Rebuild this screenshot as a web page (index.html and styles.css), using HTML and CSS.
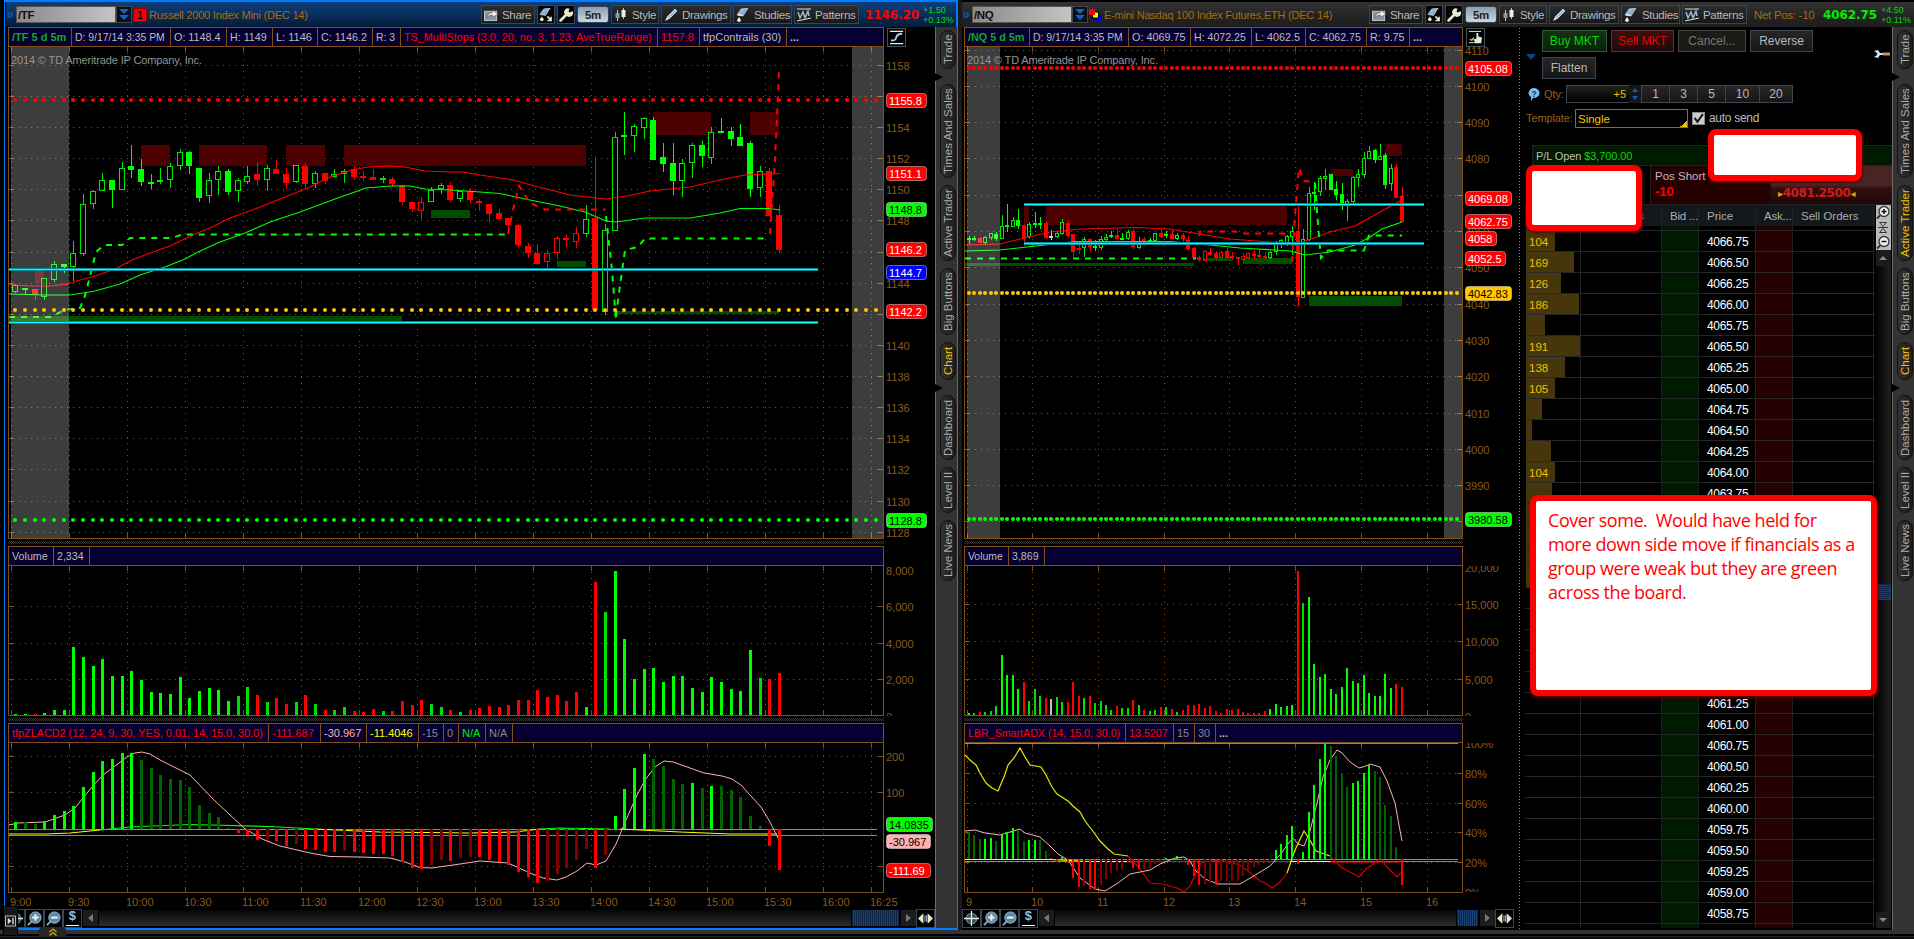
FILE: index.html
```html
<!DOCTYPE html>
<html lang="en">
<head>
  <meta charset="UTF-8" />
  <title>Charts</title>
  <link rel="stylesheet" href="styles.css">
</head>
<body>
  <svg class="defs" width="0" height="0">
    <symbol id="i-share" viewBox="0 0 15 13"><rect x="0.5" y="2.5" width="13" height="10" fill="#8796a5" stroke="#c3ccd4"/><path d="M3 9 Q4 4 9 4 V1 L15 5.5 L9 9 V6.5 Q5 6.5 3 9Z" fill="#f2f2e6" stroke="#333" stroke-width=".5"/></symbol>
    <symbol id="i-flask" viewBox="0 0 14 14"><path d="M5 1 L12 0 L7 8 L1 7Z" fill="#8fb4d0" stroke="#dfeaf2" stroke-width=".6"/><path d="M1 7 L7 8 L4 6Z" fill="#fff"/><path d="M3 9 L5 12 A2 2 0 1 1 1 12Z" fill="#e4ecd4"/></symbol>
    <symbol id="i-flask2" viewBox="0 0 15 15"><path d="M5 1 L12 0 L7 8 L1 7Z" fill="#8fb4d0" stroke="#dfeaf2" stroke-width=".6"/><path d="M3 9 L5 12 A2 2 0 1 1 1 12Z" fill="#e4ecd4"/><path d="M9 9 L13 13 M13 9.5 V13.5 H9" fill="none" stroke="#e8ecd8" stroke-width="1.6"/></symbol>
    <symbol id="i-wrench" viewBox="0 0 14 14"><path d="M1.5 12.5 L8 6" stroke="#e6ead2" stroke-width="2.6" stroke-linecap="round"/><path d="M7 7 A3.5 3.5 0 0 1 10.5 .8 L9.5 3.5 L11 4.5 L13.3 3 A3.5 3.5 0 0 1 7 7Z" fill="#e6ead2"/></symbol>
    <symbol id="i-style" viewBox="0 0 14 14"><path d="M3.5 2 V13 M9.5 0 V11" stroke="#b9c8d4"/><rect x="1.5" y="5" width="4" height="5" fill="#6fa0c4"/><rect x="7.5" y="2" width="4" height="7" fill="#e9eede"/></symbol>
    <symbol id="i-pencil" viewBox="0 0 14 14"><path d="M3 9 L11 1 L13 3 L5 11Z" fill="#9dc0dc" stroke="#e0ecf5" stroke-width=".7"/><path d="M3 9 L5 11 L1 13Z" fill="#f0ead0"/></symbol>
    <symbol id="i-patterns" viewBox="0 0 14 14"><path d="M0 1 L14 1 M0 13 L14 10" stroke="#dfe6dc"/><path d="M1 4 L3 10 L6 4 L8 10 L11 3 L12 8" fill="none" stroke="#8fb4d0" stroke-width="1.6"/></symbol>
    <symbol id="i-cross" viewBox="0 0 16 16"><circle cx="8" cy="8" r="5.5" fill="#33465a" stroke="#587893" stroke-width="1.5"/><path d="M8 0 V16 M0 8 H16" stroke="#eef0d4" stroke-width="1.4"/></symbol>
    <symbol id="i-zin" viewBox="0 0 16 16"><path d="M1 15 L5 11" stroke="#86a6bd" stroke-width="2"/><circle cx="9" cy="7" r="6" fill="#5d86a8" stroke="#a9c6dc"/><path d="M9 3.5 V10.5 M5.5 7 H12.5" stroke="#f4f4dc" stroke-width="2.2"/></symbol>
    <symbol id="i-zout" viewBox="0 0 16 16"><path d="M1 15 L5 11" stroke="#86a6bd" stroke-width="2"/><circle cx="9" cy="7" r="6" fill="#5d86a8" stroke="#a9c6dc"/><path d="M5.5 7 H12.5" stroke="#f4f4dc" stroke-width="2.2"/></symbol>
    <symbol id="i-expand" viewBox="0 0 14 12"><path d="M0 6 L5 1 V11Z M14 6 L9 1 V11Z" fill="#e2ecc8"/><path d="M6.5 3 V9 M8 3 V9" stroke="#9cb0c0"/></symbol>
    <symbol id="i-curve" viewBox="0 0 16 16"><path d="M1 1.5 H15 M1 14.5 H15" stroke="#f5f0c0" stroke-width="1.2"/><path d="M2 11 C8 12 7 9 8 7 S10 4 14 4" fill="none" stroke="#a9d2ee" stroke-width="2"/></symbol>
    <symbol id="i-hand" viewBox="0 0 16 16"><path d="M1 1.5 H14 M1 13.5 H10" stroke="#f5f0c0"/><path d="M2 10 Q5 12 6 8" fill="none" stroke="#a9d2ee" stroke-width="1.5"/><path d="M8 14 L6 10 L9 9 V3.5 Q10 2.5 11 3.5 V7 L15 8 L14 14Z" fill="#e6e8d8"/></symbol>
    <symbol id="i-zp" viewBox="0 0 14 14"><circle cx="8" cy="6" r="5" fill="#eee" stroke="#333" stroke-width="1.3"/><path d="M8 3.5 V8.5 M5.5 6 H10.5" stroke="#111" stroke-width="1.5"/><path d="M1 13 L4 10" stroke="#333" stroke-width="2"/></symbol>
    <symbol id="i-zm" viewBox="0 0 14 14"><circle cx="8" cy="6" r="5" fill="#eee" stroke="#333" stroke-width="1.3"/><path d="M5.5 6 H10.5" stroke="#111" stroke-width="1.5"/><path d="M1 13 L4 10" stroke="#333" stroke-width="2"/></symbol>
  </svg>

  <main class="desk">
    <section class="window win-left">
      <header class="titlebar">
        <span class="ring"></span>
        <div class="symbol">/TF</div><div class="drop"><i></i><i></i></div>
        <span class="link-one">1</span>
        <span class="name">Russell 2000 Index Mini (DEC 14)</span>
        <div class="tools"></div>
        <span class="last down">1146.20</span>
        <span class="change">+1.50<br>+0.13%</span>
      </header>
      <div class="body">
        <div class="charts" id="tf"></div>
        <nav class="tabs"></nav>
      </div>
    </section>

    <div class="gutter"></div>

    <section class="window win-right">
      <header class="titlebar">
        <span class="ring"></span>
        <div class="symbol">/NQ</div><div class="drop"><i></i><i></i></div>
        <svg class="link-multi" viewBox="0 0 13 12"><path d="M7 6h6v6h-6z" fill="#00f"/><path d="M3.5 3h6v6h-6z" fill="#ff0" stroke="#000"/><path d="M0 0h6v6h-6z" fill="#f00"/></svg>
        <span class="name">E-mini Nasdaq 100 Index Futures,ETH (DEC 14)</span>
        <div class="tools"></div>
        <span class="netpos">Net Pos: -10</span>
        <span class="last up">4062.75</span>
        <span class="change">+4.50<br>+0.11%</span>
      </header>
      <div class="body">
        <div class="charts" id="nq"></div>
        <div class="dots"></div>
        <aside class="trader">
          <div class="orders">
            <i class="tri"></i>
            <div class="order-buttons">
              <button class="buy">Buy MKT</button><button class="sell">Sell MKT</button><button class="cancel">Cancel...</button><button class="reverse">Reverse</button>
              <button class="flatten">Flatten</button>
            </div>
            <svg class="spanner" viewBox="0 0 16 8"><path d="M0 1 L4 0 L6 3 H9 V5 H6 L4 8 L0 7 L3 5 V3Z" fill="#cfe0ee"/><path d="M9 2.5 H16 V5.5 H9Z" fill="#d98c3a"/></svg>
          </div>
          <div class="qty">
            <svg class="help" viewBox="0 0 12 13"><path d="M6 0 A6 5 0 1 1 5 10 L3 13 L3 9 A6 5 0 0 1 6 0Z" fill="#7fc0ee"/><text x="6" y="9" text-anchor="middle">?</text></svg>
            <label>Qty:</label>
            <div class="qty-input">+5</div><div class="spin"><i></i><i></i></div>
            <button>1</button><button>3</button><button>5</button><button class="w">10</button><button class="w">20</button>
          </div>
          <div class="template">
            <label>Template:</label><div class="select">Single</div>
            <div class="check"><svg viewBox="0 0 10 10"><path d="M1.5 4.5 L4 8 L9 1" fill="none" stroke="#111" stroke-width="1.8"/></svg></div>
            <span>auto send</span>
          </div>
          <div class="pl">P/L Open <b>$3,700.00</b></div>
          <div class="pos">
            <div class="pos-short">Pos Short<strong>-10</strong></div>
            <div class="avg"><i>▸</i>4081.2500<i>◂</i></div>
          </div>
          <div class="ladder">
            <div class="rows">
              <div class="row head"><span></span><span class="r">s</span><span>Bid ...</span><span>Price</span><span>Ask...</span><span>Sell Orders</span></div>
              <div class="scroll-rows" id="ladder"></div>
            </div>
            <div class="scroll">
              <div class="zooms"><svg><use href="#i-zp"/></svg><svg viewBox="0 0 10 12"><path d="M0 6 H10 M1.5 1 H8.5 L5 5Z M1.5 11 H8.5 L5 7Z" fill="none" stroke="#333"/></svg><svg><use href="#i-zm"/></svg></div>
              <div class="arrow up-arrow"></div>
              <div class="track"><div class="thumb"></div></div>
              <div class="arrow down-arrow"></div>
            </div>
          </div>
          <div class="mask mask-bal"></div>
          <div class="mask mask-buy"></div>
          <div class="note">Cover some.&nbsp; Would have held for<br>more down side move if financials as a<br>group were weak but they are green<br>across the board.</div>
        </aside>
        <nav class="tabs"></nav>
      </div>
    </section>
    <div class="pin"><svg viewBox="0 0 12 12"><path d="M.5 .5 H11.5 V11.5 H.5Z" fill="none" stroke="#ccc"/><path d="M3 2.5 L7 6 L3 9.5Z M8 2.5 H9.5 V9.5 H8Z" fill="#ddd"/></svg></div>
    <div class="pull"><svg viewBox="0 0 8 8"><path d="M.5 4 L4 1 L7.5 4 M.5 7.5 L4 4.5 L7.5 7.5" fill="none" stroke="#e0a800" stroke-width="1.2"/></svg></div>
  </main>
  <footer class="bottom"></footer>
  <script src="charts.js"></script>
</body>
</html>
```

FILE: styles.css
```css
* { box-sizing: border-box; }

body {
  margin: 0;
  width: 1914px;
  height: 939px;
  overflow: hidden;
  background: #000;
  color: #bcbcbc;
  font-family: "Liberation Sans", Arial, sans-serif;
  font-size: 11px;
}

.defs { position: absolute; }

.desk {
  display: flex;
  position: relative;
  height: 930px;
  padding-left: 4px;
}

.window { display: flex; flex-direction: column; }

.win-left {
  width: 954px;
  border: solid #007eff;
  border-width: 2px 2px 2px 1px;
}

.win-right {
  width: 952px;
  padding-top: 2px;
}

.gutter {
  width: 4px;
  background: repeating-conic-gradient(#333 0 25%, #000 0 50%) 0 0 / 2px 2px;
}

/* title bar */
.titlebar {
  display: flex;
  align-items: center;
  flex: none;
  height: 25px;
  background: linear-gradient(#333, #222 60%, #1e1e1e);
}

.win-left .titlebar {
  background: linear-gradient(#0c3f7a, #082f5c 50%, #041b36);
  border-left: 1px solid #000;
}

.ring {
  width: 6px;
  height: 6px;
  margin: 0 3px 0 1px;
  border: 2px solid #0a4fa8;
  border-radius: 50%;
}

.symbol {
  width: 100px;
  height: 17px;
  padding-left: 1px;
  line-height: 16px;
  font-size: 11.5px;
  font-weight: bold;
  letter-spacing: -.4px;
  color: #111;
  border: 1px solid #555;
  background: linear-gradient(90deg, #8a8a8a, #c4c4c4);
}

.drop {
  display: flex;
  flex-direction: column;
  align-items: center;
  justify-content: center;
  gap: 1px;
  width: 16px;
  height: 17px;
  background: #06101c;
  border: 1px solid #444;
}

.drop i {
  border: 5px solid transparent;
  border-top: 5px solid #1560c4;
  border-bottom: 0;
}

.link-one {
  width: 14px;
  height: 14px;
  margin-left: 1px;
  line-height: 13px;
  text-align: center;
  color: #000;
  background: #f00000;
  border: 1px solid #900;
}

.link-multi { width: 13px; height: 12px; margin-left: 1px; }

.name {
  flex: 1;
  margin-left: 2px;
  color: #a86c0c;
  white-space: nowrap;
  letter-spacing: -.22px;
}

.tools { display: flex; gap: 2px; height: 19px; }

.tool {
  display: flex;
  align-items: center;
  gap: 4px;
  padding-left: 2px;
  font-size: 11.5px;
  letter-spacing: -.3px;
  color: #b8b8b8;
  border: 1px solid #3c4450;
  background: linear-gradient(#2c2c2c, #181818);
}

.tool svg { width: 14px; height: 14px; flex: none; }
.tool.dark { background: #050505; padding-left: 1px; }

.tool.period {
  justify-content: center;
  padding: 0;
  margin: 1px 0;
  border-radius: 3px;
  font-weight: bold;
  color: #222;
  background: linear-gradient(#8e9eae, #c8d6e2);
}

.netpos { margin-left: 7px; width: 69px; color: #a86c0c; font-size: 11.5px; white-space: nowrap; letter-spacing: -.3px; }
.last { width: 58px; margin-left: 6px; font: bold 12px "DejaVu Sans", sans-serif; letter-spacing: -.1px; }
.last.down { color: #f00; }
.last.up { margin-left: 0; color: #0e0; }
.change { width: 33px; font-size: 9px; line-height: 10px; color: #0d0; white-space: nowrap; }

.body { display: flex; flex: 1; min-height: 0; }

/* chart column */
.charts { display: flex; flex-direction: column; }
#tf { width: 930px; padding-left: 3px; }
#nq { width: 555px; padding-left: 2px; }

.strip { display: flex; height: 20px; flex: none; align-items: center; }

.cells {
  display: flex;
  height: 20px;
  background: #050030;
  border: 1px solid #7f5117;
}

#tf .cells, #tf .splitter { width: 876px; }
#nq .cells, #nq .splitter { width: 499px; }

.cell {
  flex: none;
  padding-left: 3px;
  line-height: 18px;
  white-space: nowrap;
  overflow: hidden;
  border-right: 1px solid #7f5117;
}

.cell:last-child { border-right: 0; }
.cell span { display: inline-block; transform-origin: 0 50%; }

.scale-btn { width: 19px; height: 19px; margin-left: 3px; border: 1px solid #46535f; background: #000; }
.scale-btn svg { display: block; width: 15px; height: 15px; margin: 1px; }

.splitter {
  flex: none;
  height: 7px;
  background: repeating-conic-gradient(#3a3a3a 0 25%, #000 0 50%) 0 0 / 2px 2px content-box;
  padding: 2px 0;
}

.plot { display: block; flex: none; }
.plot text { font-size: 11px; fill: #8a5a1c; }
.plot .copy { fill: #949494; }

.navbar { display: flex; height: 19px; flex: none; }
.win-left .navbar { margin-left: -3px; padding-left: 1px; }
.win-right .navbar { margin-left: -2px; margin-right: 3px; }

.nav-btn {
  width: 19px;
  height: 19px;
  padding: 1px;
  border: 1px solid #3a4655;
  background: #000;
}

.nav-btn svg { display: block; width: 15px; height: 15px; }
.dollar { text-align: center; font: bold 13px "Liberation Mono", monospace; color: #8cc0ea; line-height: 14px; padding: 0; }
.dollar u { display: block; width: 13px; height: 1px; margin: 1px auto 0; background: #fff; }

.nav-arrow {
  display: flex;
  align-items: center;
  justify-content: center;
  width: 15px;
  height: 16px;
  margin: 1px 0 0 1px;
  background: #1c1c1c;
}

.nav-arrow::after { content: ""; border: 4px solid transparent; border-right: 5px solid #777; border-left: 0; }
.nav-arrow.right::after { border-left: 5px solid #777; border-right: 0; }
.nav-track { flex: 1; height: 16px; margin: 1px 1px; display: flex; justify-content: flex-end; background: linear-gradient(#060606, #2c2c2c); }
.nav-thumb { background: repeating-linear-gradient(90deg, #0c2344 0 1px, #1c4272 1px 2px); border-left: 1px solid #000; }
#tf .nav-thumb { width: 48px; }
#nq .nav-thumb { width: 22px; }

/* side tabs */
.tabs {
  display: flex;
  flex-direction: column;
  align-items: center;
  width: 22px;
  flex: none;
  padding: 3px 0 0 2px;
  background: #333;
  border-left: 1px solid #6c6c6c;
  position: relative;
}

.tab {
  display: flex;
  align-items: center;
  justify-content: center;
  width: 16px;
  flex: none;
  margin-bottom: 7px;
  border: 1px solid #111;
  border-radius: 8px;
  background: linear-gradient(90deg, #1c1c1c, #333);
  writing-mode: vertical-rl;
  transform: rotate(180deg);
  white-space: nowrap;
  font-size: 11.5px;
  color: #acacac;
}

.tab.on { color: #f0c000; }
.tab.gap { margin-bottom: 15px; }
.notch { position: absolute; left: -1px; border: 4px solid transparent; border-left: 8px solid #000; border-right: 0; }
.notch.first { top: 46px; }
.notch.second { top: 357px; }

/* active trader */
.dots {
  width: 8px;
  background: radial-gradient(#888 .7px, transparent .9px) 1px 0 / 3px 3px;
  border-right: 4px solid #000;
}

.trader { position: relative; flex: 1; height: 901px; overflow: hidden; }

button {
  padding: 0;
  font: inherit;
  font-size: 12px;
  color: #b8b8b8;
  border: 1px solid #3c4652;
  background: linear-gradient(#262626, #161616);
}

.orders { display: flex; height: 56px; padding-top: 3px; align-items: flex-start; }
.orders .tri { margin: 24px 10px 0 1px; border: 5.5px solid transparent; border-top: 6px solid #0a4590; border-bottom: 0; }
.order-buttons { width: 284px; display: flex; flex-wrap: wrap; gap: 5px 4px; margin-left: -4px; }
.order-buttons button { height: 22px; }
.order-buttons .buy { width: 65px; color: #0d0; background: linear-gradient(#163016, #0b200b); border-color: #2f5a3a; }
.order-buttons .sell { width: 63px; color: #e00; background: linear-gradient(#3a1010, #200a0a); border-color: #5a3030; }
.order-buttons .cancel { width: 68px; color: #777; background: #1a1a16; border-color: #44483f; }
.order-buttons .reverse { width: 63px; }
.order-buttons .flatten { width: 54px; }
.spanner { width: 16px; height: 8px; margin: 20px 0 0 48px; flex: none; }

.qty { display: flex; align-items: center; height: 22px; padding-left: 3px; }
.help { width: 12px; height: 13px; margin-right: 4px; }
.help text { font-size: 9px; font-weight: bold; fill: #123a6a; }
.qty label { width: 22px; color: #96621a; }
.qty-input { width: 63px; height: 18px; line-height: 16px; text-align: right; padding-right: 3px; color: #f0c000; border: 1px solid #3c4652; border-right: 0; background: linear-gradient(#222, #000); }
.spin { display: flex; flex-direction: column; gap: 4px; justify-content: center; align-items: center; width: 12px; height: 18px; background: #161616; }
.spin i { border: 3.5px solid transparent; border-bottom: 4px solid #1258b8; border-top: 0; }
.spin i + i { border-top: 4px solid #1258b8; border-bottom: 0; }
.qty button { width: 28px; height: 18px; border-right-width: 0; }
.qty button.w { width: 34px; }
.qty button:last-child { border-right-width: 1px; }

.template { display: flex; align-items: center; height: 26px; }
.template label { width: 50px; color: #96621a; white-space: nowrap; padding-left: 1px; letter-spacing: -.1px; }
.template span { font-size: 12px; letter-spacing: -.3px; }
.select {
  width: 113px;
  height: 19px;
  padding-left: 2px;
  line-height: 19px;
  font-size: 11.5px;
  color: #f0c800;
  border: 1px solid #9a6a14;
  background: linear-gradient(135deg, transparent 50%, #f0c000 50%) 100% 100% / 7px 7px no-repeat;
}
.check { width: 13px; height: 13px; margin: 0 4px; background: #ccc; border: 1px solid #888; }
.check svg { display: block; width: 11px; height: 11px; }

.pl { height: 21px; margin: 14px 0 0 7px; padding-left: 3px; line-height: 20px; background: #001a00; border: 1px solid #222; border-right: 0; letter-spacing: -.1px; }
.pl b { font-weight: normal; color: #0d0; }
.pos { display: flex; height: 38px; margin-left: 125px; }
.pos-short { display: flex; flex-direction: column; width: 121px; padding: 4px 4px 0; font-size: 11.5px; background: #260000; border-right: 1px solid #111; border-left: 1px solid #222; }
.pos-short strong { margin-top: 2px; font-size: 13px; color: #f00; }
.avg { flex: 1; padding: 20px 0 0 7px; font: bold 12px "DejaVu Sans", sans-serif; letter-spacing: -.4px; color: #d81818; white-space: nowrap; background: linear-gradient(#4a2424 0 50%, #300e0e 60%, #220606); }
.avg i { color: #e8a000; font-style: normal; font-size: 10px; }

.ladder { display: flex; height: 724px; border-top: 1px solid #222; }
.rows { width: 350px; display: flex; flex-direction: column; }
.row { display: grid; flex: none; grid-template-columns: 56px 81px 37px 57px 37px 81px; height: 21px; border-bottom: 1px solid #262626; }
.row span { padding-left: 8px; border-right: 1px solid #222; font-size: 11.5px; line-height: 22px; white-space: nowrap; overflow: hidden; }
.row span:nth-child(3) { background: #001a00; }
.row span:nth-child(5) { background: #260000; }
.row span:nth-child(4) { color: #fff; font-size: 12px; letter-spacing: -.3px; }
.head { background: #12181c; border: 0; }
.head span:nth-child(n) { background: none; color: #acacac; font-size: 11.5px; letter-spacing: 0; }
.head span:nth-child(3), .head span:nth-child(5) { letter-spacing: -.2px; }
.head .r { text-align: right; padding-right: 17px; }
.row .size { position: relative; padding-left: 4px; color: #f0c000; }
.size i { position: absolute; left: 1px; top: 0; bottom: 0; background: #46360c; }
.size em { position: relative; font-style: normal; }
.stub { flex: none; height: 5px; overflow: hidden; }
.stub .row { height: 5px; }
.scroll-rows { flex: 1; overflow: hidden; }

.scroll { display: flex; flex-direction: column; align-items: center; width: 16px; }
.zooms { display: flex; flex-direction: column; align-items: center; width: 15px; height: 45px; background: #bbb; }
.zooms svg { width: 14px; height: 15px; }
.zooms svg:nth-child(2) { width: 10px; height: 13px; margin: 1px; }
.arrow { display: flex; align-items: center; justify-content: center; width: 15px; height: 16px; background: #1c1c1c; }
.arrow::after { content: ""; border: 4px solid transparent; border-bottom: 4px solid #888; border-top: 0; }
.down-arrow::after { border-top: 4px solid #888; border-bottom: 0; }
.track { flex: 1; width: 15px; padding-top: 318px; background: linear-gradient(90deg, #000, #222); }
.thumb { height: 16px; background: repeating-linear-gradient(#0c2344 0 1px, #1c4272 1px 2px); }

/* annotations drawn over the panels */
.mask, .note {
  position: absolute;
  background: #fff;
  border: 6px solid #f00;
  border-radius: 8px;
  box-shadow: 1px 2px 3px #600;
}

.mask-bal { left: 183px; top: 102px; width: 154px; height: 52px; }
.mask-buy { left: 1px; top: 138px; width: 116px; height: 66px; }

.note {
  left: 5px;
  top: 468px;
  width: 347px;
  height: 201px;
  padding: 7px 4px 0 12px;
  font: 18px/24px "Open Sans", "Noto Sans", sans-serif;
  letter-spacing: -.44px;
  white-space: nowrap;
  color: #f00;
}

.pin { position: absolute; left: 3px; top: 906px; width: 15px; height: 30px; padding: 8px 1px; background: #181818; border: 1px solid #000; }
.pin svg { display: block; width: 11px; height: 12px; }
.pull { position: absolute; left: 39px; top: 927px; width: 27px; height: 9px; background: #262626; border-radius: 4px 4px 0 0; text-align: center; }
.pull svg { display: block; width: 8px; height: 8px; margin: 1px auto; }

.bottom { height: 9px; background: linear-gradient(#333 4px, #000 4px 6px, #222 6px 7px, #0c0c0c 7px); }
```

FILE: charts.js
```js
const GREEN = '#00ff00', RED = '#ff0000', GRID = '#7f5117';
const BAR = { G: '#00ff00', g: '#00e000', d: '#006400', R: '#ff0000', m: '#800000', W: '#c0c0c0' };

const tf = {
  id: 'tf', x0: 8, x1: 884, end: 935, first: 15.2, step: 9.667, body: 6,
  shade: [[11, 69], [852, 883]],
  vgrid: [11, 69, 127, 185, 243, 301, 359, 417, 475, 533, 591, 649, 707, 765, 823, 871],
  times: ['9:00', '9:30', '10:00', '10:30', '11:00', '11:30', '12:00', '12:30', '13:00', '13:30', '14:00', '14:30', '15:00', '15:30', '16:00', '16:25'],
  head: [['/TF 5 d 5m', 63, 'b'], ['D: 9/17/14 3:35 PM', 99], ['O: 1148.4', 56], ['H: 1149', 46], ['L: 1146', 45], ['C: 1146.2', 55], ['R: 3', 28],
    ['TS_MultiStops (3.0, 20, no, 3, 1.23, AveTrueRange)', 257, '#f00'], ['1157.8', 42, '#f00'], ['tfpContrails (30)', 87], ['...', 60, 'b2']],
  vol: [['Volume', 45], ['2,334', 36], ['', 10]],
  study: [['tfpZLACD2 (12, 24, 9, 30, YES, 0.01, 14, 15.0, 30.0)', 260, '#f00'], ['-111.687', 52, '#f00'], ['-30.967', 46, '#ffb0b0'], ['-11.4046', 52, '#ff0'],
    ['-15', 25, '#888'], ['0', 15, '#888'], ['N/A', 27, '#0e0'], ['N/A', 27, '#888'], ['', 10]],
  hgrid: [...Array(16).keys()].map(i => [1158 - 2 * i, 65.3 + 31.13 * i]),
  hidden: [1156, 1146, 1142],
  tags: [['1155.8', 100.5, RED], ['1151.1', 173.5, RED], ['1148.8', 209.5, GREEN], ['1146.2', 249.5, RED], ['1144.7', 272.5, '#0000ff'], ['1142.2', 311.5, RED], ['1128.8', 520.5, GREEN]],
  tagW: 40,
  dots: [[100, RED], [310, '#ffc800'], [520, GREEN]], nDots: 90,
  cyan: [[9, 818, 269.5], [9, 818, 322.5]],
  boxes: [['r', 35, 271, 44, 283], ['r', 141, 145, 170, 166], ['r', 199, 145, 267, 166], ['r', 286, 145, 325, 166], ['r', 344, 145, 586, 166], ['r', 653, 112, 711, 135], ['r', 750, 112, 779, 135],
    ['g', 431, 210, 470, 218], ['g', 557, 261, 586, 267], ['g', 9, 316, 402, 322], ['g', 618, 311, 779, 314]],
  candles: `284,285,292,293,g 288,288,290,295,G 289,289,295,300,R 278,278,297,300,g 261,264,280,282,g 264,264,267,273,G
    241,253,267,281,g 194,204,254,256,g 190,191,204,209,g 173,180,191,191,g 180,180,190,208,G 162,168,190,190,g
    145,166,170,178,G 159,169,182,186,G 174,182,184,189,G 168,180,182,184,g 163,166,180,188,g 149,152,166,170,g
    151,152,166,174,G 168,168,198,202,G 173,180,196,203,g 166,171,180,195,g 169,171,192,195,G 178,180,191,202,g
    166,176,182,184,g 162,174,180,186,R 165,168,180,191,g 160,169,174,174,R 168,174,183,189,R 165,165,182,183,g
    163,166,184,189,R 171,173,184,188,g 173,173,181,184,R 169,174,177,178,g 169,171,174,183,g 166,169,177,180,R
    171,176,178,181,R 169,177,180,180,R 176,178,180,183,g 177,179,184,187,R 185,185,202,205,R 201,202,209,212,R
    197,202,211,219,r 187,190,202,202,g 183,185,189,194,g 182,185,200,202,R 190,191,199,202,g 188,191,200,203,R
    199,201,203,211,R 204,204,214,222,R 209,213,219,219,R 218,218,225,232,R 224,225,245,247,R 243,246,253,258,R
    244,253,264,265,R 250,253,262,268,r 236,238,253,259,r 235,238,240,247,R 227,233,242,248,r 205,219,234,237,g
    157,218,310,310,R 224,230,312,315,g 132,137,231,231,g 112,135,137,155,G 124,126,136,152,g 117,118,128,139,g
    117,120,160,160,G 143,157,164,172,G 143,163,181,195,G 159,163,181,197,g 143,145,163,178,g 141,145,156,167,G
    127,132,158,164,g 118,131,133,133,G 127,131,139,146,G 124,137,146,146,G 141,143,189,197,G 166,171,188,197,g
    168,171,216,216,R 205,215,250,253,R`,
  lines: [
    [RED, '9,284.5 30,286 50,286 68,284 80,280 92,277 115,269 132,260 150,253 170,246 195,234 212,227 230,218 255,209 280,199 310,187 330,177 352,170 368,167 388,166 405,167 425,171 450,172 463,172 480,175 513,180 535,186 570,195 606,199 627,196 650,191 690,187 720,180 745,175 780,173.5'],
    [GREEN, '9,294 45,295 70,295 95,291 120,284 140,275 165,267 185,259 198,252 220,242 245,233 270,222 300,212 335,199 352,193 366,188 390,186 410,186 425,189 450,190 480,192 500,193.5 525,199 560,206 585,212 606,221 616,222 645,218 690,218 720,213 740,208.5 770,208.5 780,210']],
  dashes: [
    [GREEN, '9,317 52,317 64,310 80,308 85,296 90,276 96,252 104,245 122,245 130,238 172,238 182,234.5 506,234.5'],
    [RED, '508,234 513,210 519,186 530,203 545,209.5 606,209.5'],
    [GREEN, '606,216 612,270 616,320 618,300 625,250 638,247 645,238.5 768,238.5'],
    [RED, '770,234 775,160 779,72']],
  vgridY: [['8,000', 570], ['6,000', 606.5], ['4,000', 643.5], ['2,000', 679.5], ['0', 716]],
  volume: '1G 1G 1R 2G 5G 5G 68G 58G 49G 56G 39G 39G 44G 35G 23G 22G 21G 38G 17G 24G 27G 25G 14G 19g 28g 20R 13g 17R 11R 13g 20R 11g 5R 5g 8g 4R 3R 6R 4g 4R 14R 10R 15R 11g 8g 5R 3g 5R 7R 9R 8R 10R 15R 15R 25R 18R 20R 14R 23R 8G 133R 103g 144G 76G 36G 46G 47G 33G 39G 39G 27G 23G 38G 33G 26G 24G 65G 37g 36R 42R',
  sgridY: [['200', 756.5], ['100', 792.5], ['', 866.5]],
  zero: 829, rules: [[829.5, 877], [835.5, 877]],
  osc: '7G 7d 5d 8G 14G 18G 23G 42G 57G 68G 70G 76G 76G 69d 61d 54d 50d 49d 42d 24d 16d 12d 1d -4R -6R -11R -10m -12R -17R -15m -20R -21R -23R -23R -22m -23R -24R -25R -25R -27R -33R -39R -40R -36m -31m -32R -29m -28m -28R -31R -33R -36R -43R -48R -54R -52m -45m -39m -31m -20m -39R -26m 13G 40G 61G 75G 70d 63d 50d 45d 46G 41d 43G 43d 39d 32d 13d 3d -17R -41R',
  olines: [
    ['#ffb0b0', '9,825 18,823 45,822 65,815 75,808 92,787 103,775 127,757 135,753 142,752 150,754 160,760 190,775 215,801 244,828 262,839 280,846 310,853 330,856.5 360,857 390,858 405,862 420,867.5 432,868 460,864 480,861 508,863 530,873 543,878 557,880 566,877 577,871 587,863 596,865 606,861 616,844 626,820 637,795 645,780 655,767 664,761 673,762 690,768 704,773 722,776 732,779 741,785 751,796 761,807 770,822 778,838'],
    ['#ffff00', '9,834 45,834 70,833 100,830'], [GREEN, '100,830 130,827 190,824.5 270,826.5 315,829'], ['#ffff00', '315,829 380,832 470,833 515,832 540,829'],
    [GREEN, '540,829 560,828 610,829'], ['#ffff00', '620,829 680,832 730,834 777,834']],
  otags: [['14.0835', 824.5, GREEN, 46], ['-30.967', 841.5, '#ffb0b0', 44], ['-111.69', 870.5, RED, 44]]
};

const nq = {
  id: 'nq', x0: 964, x1: 1463, end: 1517, first: 969, step: 5.48, body: 4,
  shade: [[967, 1000], [1444, 1462]],
  vgrid: [967, 1032, 1098, 1164, 1229, 1295, 1361, 1427],
  times: ['9', '10', '11', '12', '13', '14', '15', '16'],
  head: [['/NQ 5 d 5m', 65, 'b'], ['D: 9/17/14 3:35 PM', 99], ['O: 4069.75', 62], ['H: 4072.25', 61], ['L: 4062.5', 54], ['C: 4062.75', 61], ['R: 9.75', 43], ['...', 40, 'b2']],
  vol: [['Volume', 44], ['3,869', 36], ['', 10]],
  study: [['LBR_SmartADX (14, 15.0, 30.0)', 161, '#f00'], ['13.5207', 48, '#f00'], ['15', 21, '#888'], ['30', 21, '#888'], ['...', 30, 'b2']],
  hgrid: [...Array(14).keys()].map(i => [4110 - 10 * i, 50 + 36.3 * i]),
  hidden: [3980],
  tags: [['4105.08', 68.5, RED], ['4069.08', 198.5, RED], ['4062.75', 221.5, RED], ['4058', 238.5, RED, 31], ['4052.5', 258.5, RED, 40], ['4042.83', 293.5, '#ffc800'], ['3980.58', 519.5, GREEN]],
  tagW: 46,
  dots: [[68, RED], [293, '#ffc800'], [519, GREEN]], nDots: 90,
  cyan: [[1024, 1424, 204.5], [1024, 1424, 243.5]],
  boxes: [['r', 1024, 205, 1029, 225], ['r', 1046, 205, 1287, 225], ['r', 1331, 169, 1353, 176], ['r', 1386, 144, 1402, 156],
    ['g', 965, 263, 1194, 266], ['g', 1204, 258, 1232, 261], ['g', 1243, 258, 1292, 264], ['g', 1309, 296, 1402, 306]],
  candles: `236,238,240,244,G 236,238,240,241,G 237,238,243,243,R 236,237,243,245,g 233,233,238,240,g 232,234,239,241,G
    215,226,239,239,g 204,225,227,232,G 217,220,227,227,g 209,220,226,229,G 225,225,239,246,R 222,224,237,239,g
    212,223,225,228,G 217,223,225,229,G 221,223,238,239,R 230,236,238,240,W 231,233,237,238,g 219,222,234,235,g
    220,223,236,238,R 234,234,252,258,R 245,248,250,254,R 237,239,248,257,g 238,239,247,252,R 240,246,248,251,G
    236,239,248,250,g 234,237,240,241,g 231,235,237,238,G 229,235,239,240,R 233,238,240,240,G 230,232,239,240,g
    229,231,247,249,R 237,241,248,249,g 237,239,241,243,R 238,240,241,242,G 233,233,241,242,g 229,233,237,238,R
    231,234,236,238,G 230,234,239,239,R 233,235,239,240,g 233,235,239,242,R 236,240,249,251,R 247,248,258,259,R
    256,257,260,262,R 250,251,261,262,r 248,252,255,256,R 251,253,258,259,R 251,252,258,259,r 248,251,258,258,R
    252,256,258,260,R 257,257,259,265,R 253,256,260,263,r 252,253,258,259,r 250,254,256,259,R 250,255,257,258,R
    252,256,258,259,R 251,252,258,259,g 241,243,252,255,g 239,240,245,248,g 235,236,245,246,g 226,231,237,255,g
    205,231,297,307,R 229,239,298,298,g 187,193,240,241,g 182,192,194,210,G 176,178,192,196,g 169,176,179,190,g
    174,174,190,190,G 181,189,195,200,G 183,194,205,210,G 199,201,205,221,g 176,177,202,203,g 169,174,178,187,g
    152,158,175,178,g 146,151,159,159,g 149,150,160,163,G 144,156,160,160,g 153,155,185,189,G 164,168,184,191,g
    164,167,198,198,R 187,196,222,222,R`,
  lines: [
    [RED, '965,245 1000,244 1020,239 1050,232 1080,229 1135,227.5 1170,229 1205,235 1230,239 1270,242 1300,243 1330,232 1355,226 1380,212 1402,200'],
    [GREEN, '965,251 1000,250 1045,245 1075,241.5 1170,241.5 1200,244 1240,248 1290,251 1305,255 1330,252 1355,245 1370,237 1382,229 1402,222']],
  dashes: [
    [GREEN, '965,258.5 1196,258.5'], [RED, '1199,236 1200,231.5 1234,231.5 1245,233.5 1287,233.5'], [RED, '1292,262 1295,215 1299,168 1304,181 1314,182'],
    [GREEN, '1315,183 1318,225 1321,258 1328,250.5 1364,250.5 1369,235.5 1402,235.5']],
  vgridY: [['20,000', 567], ['15,000', 604.5], ['10,000', 641.5], ['5,000', 679.5], ['0', 716]],
  volume: '2G 2g 3R 3g 4g 9g 60G 40G 40G 26G 33R 14g 26g 19g 17R 16W 18g 13g 13R 33R 19R 17g 19R 12g 14g 10g 5g 9R 7g 7g 15R 10g 5R 4g 5g 8R 8g 6R 3g 5R 10R 10R 11R 7R 9R 4R 2R 6R 5R 6R 3R 2R 2R 2R 4R 6G 11G 8G 9G 10G 144R 112g 118G 51G 38G 41G 26G 21G 28G 47G 34G 32G 40G 22G 19G 19G 41G 27G 31R 28R',
  sgridY: [['100%', 743], ['80%', 773.5], ['60%', 803.5], ['40%', 832.5], ['20%', 862.5], ['0%', 892]],
  zero: 859, rules: [[743.5, 1458], [859.5, 1458], [861.5, 1458]],
  osc: '27d 24d 20d 20G 21G 18d 24G 27G 31G 29d 18d 19G 19G 19d 8d 1R -3R 2G -4R -19R -28R -27m -30R -31R -26m -20m -14m -12m -10m -4m -9R -10R -10m -9m -5m -3m 1G 1d 3G -1m -6R -17R -26R -25m -24m -26R -22m -22m -22m -22m -17m -12m -8m -6m -4m -1m 9G 15G 24G 33G -5R 7G 47G 74G 100G 116G 113d 103d 86d 72d 76G 78G 86G 94G 88d 82d 54d 43d 12d -26R',
  olines: [
    ['#ffff00', '965,859.5 1050,859.5 1090,861.5 1330,861.5'], [RED, '1130,861.5 1290,861.5'], [RED, '1330,862 1402,862'],
    ['#e8e800', '965,755 970,760 976,765 980,773 986,783 992,788 998,791 1004,777 1008,765 1014,758 1020,748 1025,757 1030,765 1041,767 1046,775 1052,787 1057,794 1068,801 1073,806 1080,812 1085,821 1092,830 1100,841 1108,849 1114,854 1128,856'],
    ['#d00000', '1128,856 1140,869 1150,883 1162,884 1177,888 1184,892 1190,886 1195,875 1202,862 1220,860 1240,865 1253,875 1260,881 1265,883 1272,888 1280,882 1287,873'],
    ['#e8e800', '1287,873 1295,850 1304,831 1311,842 1316,851 1330,856'],
    ['#d00000', '1330,856 1342,868 1352,873 1359,877 1366,869 1372,865 1380,858 1388,868 1397,877 1402,872'],
    ['#ffb0b0', '965,831 975,830 985,833 1000,835 1010,832 1020,829 1025,833 1040,837 1050,846 1058,854 1068,860 1080,878 1095,889 1105,891 1118,883 1130,874 1150,870 1160,864 1175,858 1184,857 1190,861 1195,870 1205,879 1218,884 1240,884 1252,877 1270,866 1280,855 1288,844 1293,838 1298,844 1304,846 1310,831 1317,803 1323,777 1330,760 1337,750 1342,753 1350,762 1359,768 1366,766 1370,764 1380,767 1387,781 1395,803 1399,825 1402,841']],
  otags: []
};

const rect = (x, y, w, h, fill, extra = '') => `<rect x="${x}" y="${y}" width="${w}" height="${h}" fill="${fill}" ${extra}/>`;
const barX = (c, i) => Math.round(c.first + c.step * i);

function frame(c, top, bottom, rows) {
  let s = '';
  for (const x of c.vgrid) {
    s += `<path d="M${x + .5} ${top} V${bottom}" stroke="${GRID}" stroke-dasharray="1 5"/>`;
    s += `<path d="M${x + .5} ${top} v5 M${x + .5} ${bottom - 5} v5" stroke="${GRID}"/>`;
  }
  for (const [, y] of rows) {
    const py = Math.floor(y) + .5;
    s += `<path d="M${c.x0 + 11} ${py} H${c.x1}" stroke="${GRID}" stroke-dasharray="1 5"/>`;
    s += `<path d="M${c.x0} ${py} h6 M${c.x1 - 6} ${py} h6" stroke="${GRID}"/>`;
  }
  return s + `<path d="M${c.x0 + .5} ${top} V${bottom - .5} H${c.x1 - .5} V${top}" fill="none" stroke="${GRID}"/>`;
}

function label(c, txt, y) {
  return `<text x="${c.x1 + 2}" y="${y + 4.5}">${txt}</text>`;
}

function tag(c, [txt, y, color, w = c.tagW]) {
  const dark = color === RED || color === '#0000ff';
  return `<rect x="${c.x1 + 2.5}" y="${y - 7}" width="${w}" height="14" rx="3" fill="${color}" stroke="#fff" stroke-opacity=".4"/>
    <text x="${c.x1 + 5}" y="${y + 4}" style="fill:${dark ? '#fff' : '#000'}">${txt}</text>`;
}

function poly([color, pts], extra = '') {
  return `<polyline points="${pts}" fill="none" stroke="${color}" ${extra}/>`;
}

function svg(c, top, bottom, inner) {
  return `<svg class="plot" width="${c.end - c.x0}" height="${bottom - top}" viewBox="${c.x0} ${top} ${c.end - c.x0} ${bottom - top}">${inner}</svg>`;
}

function pricePlot(c) {
  let s = frame(c, 47, 539, c.hgrid);
  for (const [k, x, y, x2, y2] of c.boxes) s += rect(x, y, x2 - x, y2 - y, k === 'r' ? '#4d0000' : '#004d00');
  c.candles.trim().split(/\s+/).forEach((row, i) => {
    const [h, t, b, l, k] = row.split(',');
    const x = barX(c, i), col = { G: GREEN, g: '#00e800', R: RED, r: RED, W: '#ccc' }[k];
    s += `<path d="M${x + .5} ${h} V${t} M${x + .5} ${b} V${l}" stroke="${col}"/>`;
    const hollow = k === 'g' || k === 'r';
    const w = c.body;
    s += hollow ? `<rect x="${x - w / 2 + .5}" y="${+t + .5}" width="${w - 1}" height="${Math.max(1, b - t - 1)}" fill="none" stroke="${col}"/>`
      : rect(x - w / 2, t, w, Math.max(1, b - t), col);
  });
  c.lines.forEach(l => s += poly(l, 'stroke-width="1.1"'));
  c.dashes.forEach(l => s += poly(l, 'stroke-width="2" stroke-dasharray="6 6"'));
  for (const [a, b] of c.shade) s += rect(a, 47, b - a, 491, '#fff', 'opacity=".24"');
  for (const [a, b, y] of c.cyan) s += rect(a, y - 1.5, b - a, 3, '#008c98') + rect(a, y - .5, b - a, 1, '#00ffff');
  for (const [y, col] of c.dots)
    for (let i = 0; i < c.nDots; i++) s += `<circle cx="${barX(c, i)}" cy="${y}" r="2" fill="${col}"/>`;
  s += `<text class="copy" x="${c.x0 + 3}" y="64" textLength="191">2014 © TD Ameritrade IP Company, Inc.</text>`;
  for (const [v, y] of c.hgrid) if (!c.hidden.includes(v)) s += label(c, v, y);
  c.tags.forEach(t => s += tag(c, t));
  return svg(c, 47, 539, s);
}

function volumePlot(c) {
  let s = frame(c, 566, 716, c.vgridY.slice(1, 4));
  c.volume.split(' ').forEach((v, i) => {
    const h = parseInt(v);
    s += rect(barX(c, i) - 1, 715 - h, c.body > 4 ? 3 : 2, h, BAR[v.slice(-1)]);
  });
  c.vgridY.forEach(([t, y]) => s += label(c, t, y));
  return svg(c, 566, 716, s);
}

function studyPlot(c) {
  let s = frame(c, 743, 893, c.sgridY.filter(r => r[1] > 750 && r[1] < 890));
  for (const [y, x] of c.rules) s += `<path d="M${c.x0 + 1} ${y} H${x}" stroke="#888"/>`;
  c.olines.filter(l => l[0] !== '#ffb0b0').forEach(l => s += poly(l, 'stroke-width="1.2"'));
  c.olines.filter(l => l[0] === '#ffb0b0').forEach(l => s += poly(l));
  c.osc.split(' ').forEach((v, i) => {
    const h = parseInt(v);
    s += rect(barX(c, i) - 1, h > 0 ? c.zero - h : c.zero, c.body > 4 ? 3 : 2, Math.abs(h), BAR[v.slice(-1)]);
  });
  // axis labels are cut off at the panel edge
  s += `<clipPath id="clip-${c.id}"><rect x="${c.x1}" y="743" width="60" height="149"/></clipPath><g clip-path="url(#clip-${c.id})">`;
  c.sgridY.forEach(([t, y]) => s += label(c, t, y));
  s += '</g>';
  c.otags.forEach(t => s += tag(c, t));
  c.times.forEach((t, i) => s += `<text x="${c.vgrid[i] - 1}" y="906">${t}</text>`);
  return svg(c, 743, 909, s);
}

function cells(list) {
  return '<div class="cells">' + list.map(([t, w, col]) => {
    let css = `width:${w}px;`;
    if (col === 'b') css += 'color:#0fa82a;font-weight:bold;';
    else if (col === 'b2') css += 'font-weight:bold;';
    else if (col) css += `color:${col};`;
    return `<div class="cell" style="${css}"><span>${t}</span></div>`;
  }).join('') + '</div>';
}

function build(c) {
  const left = c.id === 'tf';
  document.getElementById(c.id).innerHTML = `
    <div class="strip">${cells(c.head)}<div class="scale-btn"><svg><use href="#${left ? 'i-curve' : 'i-hand'}"/></svg></div></div>
    ${pricePlot(c)}<div class="splitter"></div>
    ${cells(c.vol)}${volumePlot(c)}<div class="splitter"></div>
    ${cells(c.study)}${studyPlot(c)}
    <div class="navbar">
      <div class="nav-btn"><svg><use href="#i-cross"/></svg></div><div class="nav-btn"><svg><use href="#i-zin"/></svg></div>
      <div class="nav-btn"><svg><use href="#i-zout"/></svg></div><div class="nav-btn dollar">$<u></u></div>
      <div class="nav-arrow"></div><div class="nav-track"><div class="nav-thumb"></div></div><div class="nav-arrow right"></div>
      <div class="nav-btn"><svg><use href="#i-expand"/></svg></div>
    </div>`;
}

build(tf);
build(nq);

// squeeze cell text that runs past its divider
document.querySelectorAll('.cell span').forEach(el => {
  const room = el.parentNode.clientWidth - 8;
  if (el.offsetWidth > room) el.style.transform = `scaleX(${room / el.offsetWidth})`;
});

const tools = [['share', 'Share', 54], ['flask2', '', 18], ['wrench', '', 18], ['', '5m', 32], ['style', 'Style', 48], ['pencil', 'Drawings', 70], ['flask', 'Studies', 59], ['patterns', 'Patterns', 65]];
document.querySelectorAll('.tools').forEach(el => {
  el.innerHTML = tools.map(([icon, text, w]) =>
    `<div class="tool ${icon ? (text ? '' : 'dark') : 'period'}" style="width:${w}px">${icon ? `<svg><use href="#i-${icon}"/></svg>` : ''}${text}</div>`).join('');
});

const tabs = [['Trade', 39, 1], ['Times And Sales', 94], ['Active Trader', 76], ['Big Buttons', 67], ['Chart', 38, 1], ['Dashboard', 65], ['Level II', 46], ['Live News', 61]];
document.querySelectorAll('.tabs').forEach((el, n) => {
  el.innerHTML = tabs.map(([t, h, gap]) => {
    const on = t === 'Chart' || (n === 1 && t === 'Active Trader');
    return `<div class="tab ${on ? 'on' : ''} ${gap ? 'gap' : ''}" style="height:${h}px">${t}</div>`;
  }).join('') + '<i class="notch first"></i><i class="notch second"></i>';
});

const sizes = [[104, 29], [169, 48], [126, 35], [186, 53], ['', 19], [191, 55], [138, 39], [105, 29], ['', 16], ['', 6], ['', 25], [104, 29], ['', 26], ['', 20], ['', 20], ['', 20], ['', 20]];
let html = '<div class="stub"><div class="row"><span class="size"><i style="width:40px"></i></span><span></span><span></span><span></span><span></span><span></span></div></div>';
for (let k = 0; k < 34; k++) {
  const [n, w] = sizes[k] || ['', 0];
  // rows 13 to 21 sit behind the note
  const price = k < 33 && (k < 13 || k > 21) ? (4066.75 - k * .25).toFixed(2) : '';
  html += `<div class="row"><span class="size"><i style="width:${w}px"></i><em>${n}</em></span><span></span><span></span><span>${price}</span><span></span><span></span></div>`;
}
document.getElementById('ladder').innerHTML = html;
```
